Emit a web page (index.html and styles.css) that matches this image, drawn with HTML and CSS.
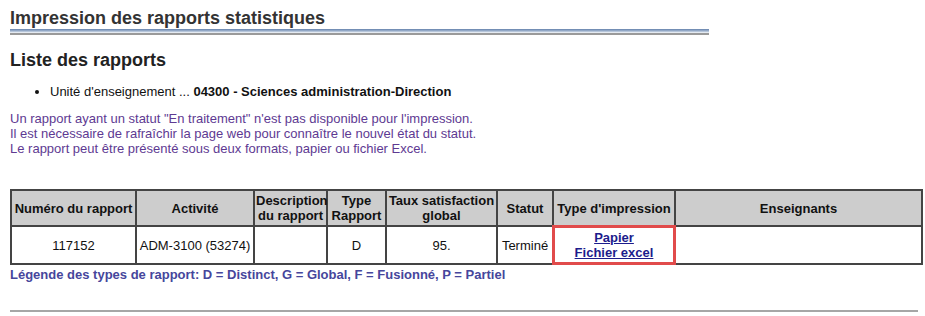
FILE: index.html
```html
<!DOCTYPE html>
<html lang="fr">
  <head>
    <meta charset="UTF-8" />
    <meta name="viewport" content="width=device-width, initial-scale=1.0" />
    <title>Impression des rapports statistiques</title>
    <link rel="stylesheet" href="styles.css">
  </head>
  <body>
    <h1 class="page-title">Impression des rapports statistiques</h1>
    <div class="title-rule"></div>

    <h2 class="section-title">Liste des rapports</h2>
    <ul class="unit-list">
      <li>Unité d'enseignement ... <b>04300 - Sciences administration-Direction</b></li>
    </ul>

    <p class="notice">
      Un rapport ayant un statut "En traitement" n'est pas disponible pour l'impression.<br>
      Il est nécessaire de rafraîchir la page web pour connaître le nouvel état du statut.<br>
      Le rapport peut être présenté sous deux formats, papier ou fichier Excel.
    </p>

    <table class="report-table" cellspacing="0">
      <thead>
        <tr>
          <th class="col-num">Numéro du rapport</th>
          <th class="col-act">Activité</th>
          <th class="col-desc">Description du rapport</th>
          <th class="col-type">Type Rapport</th>
          <th class="col-taux">Taux satisfaction global</th>
          <th class="col-stat">Statut</th>
          <th class="col-print">Type d'impression</th>
          <th>Enseignants</th>
        </tr>
      </thead>
      <tbody>
        <tr>
          <td>117152</td>
          <td>ADM-3100 (53274)</td>
          <td></td>
          <td>D</td>
          <td>95.</td>
          <td>Terminé</td>
          <td class="print-links">
            <a href="#">Papier</a><br>
            <a href="#">Fichier excel</a>
          </td>
          <td></td>
        </tr>
      </tbody>
    </table>
    <p class="legend">Légende des types de rapport: D = Distinct, G = Global, F = Fusionné, P = Partiel</p>

    <hr class="bottom-rule">
  </body>
</html>
```

FILE: styles.css
```css
body {
  margin: 0 2px 0 10px;
  font-family: Arial, "Liberation Sans", sans-serif;
  font-size: 13px;
  color: #111;
  background-color: #fff;
}

.page-title {
  margin: 0;
  padding-top: 8px;
  font-size: 18px;
  font-weight: bold;
  line-height: 21px;
  color: #333;
}

/* blue bar with a thin grey line under it */
.title-rule {
  width: 699px;
  height: 6px;
  background: linear-gradient(
    to bottom,
    #6784ad 0,
    #7f98bc 1px,
    #a3b6d0 2px,
    #c9d5e4 3px,
    #fff 4px,
    #fff 4px,
    #9a9a9a 4px,
    #9a9a9a 6px
  );
}

.section-title {
  margin: 15px 0 0;
  font-size: 18px;
  font-weight: bold;
  line-height: 21px;
  color: #222;
}

.unit-list {
  margin: 12px 0 0;
  padding-left: 40px;
  line-height: 17px;
}

.notice {
  margin: 11px 0 0;
  line-height: 15px;
  color: #5e3a92;
}

.report-table {
  margin-top: 33px;
  width: 100%;
  table-layout: fixed;
  border: 1px solid #444;
  border-collapse: separate;
}

.report-table th,
.report-table td {
  border: 1px solid #444;
  padding: 0 1px;
  text-align: center;
  line-height: 15px;
}

.report-table th {
  background-color: #cdcdcd;
  height: 34px;
  font-weight: bold;
}

.report-table td {
  height: 36px;
}

.col-num { width: 121px; }
.col-act { width: 114px; }
.col-desc { width: 69px; }
.col-type { width: 55px; }
.col-taux { width: 107px; }
.col-stat { width: 52px; }
.col-print { width: 118px; }

.print-links {
  outline: 3px solid #e14b4b;
  outline-offset: -2px;
  line-height: 16px;
}

.print-links a {
  color: #1c1c8c;
  font-weight: bold;
}

.legend {
  margin: 2px 0 0;
  font-weight: bold;
  color: #46469c;
}

.bottom-rule {
  margin: 28px 0 0;
  width: 908px;
  border: none;
  border-top: 2px solid #a6a6a6;
}
```
